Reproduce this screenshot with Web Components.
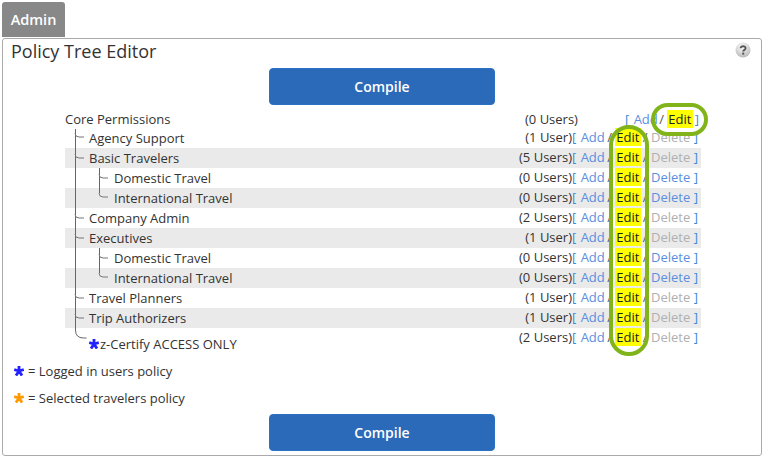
<!DOCTYPE html>
<html>
<head>
<meta charset="utf-8">
<style>
  html, body { margin: 0; padding: 0; background: #fff; }
  body { font-family: "Open Sans", sans-serif; font-size: 13px; color: #333; }
</style>
</head>
<body>
<admin-page>
  <admin-tab>Admin</admin-tab>
  <policy-panel heading="Policy Tree Editor">
    <compile-button>Compile</compile-button>
    <policy-tree>
      <policy-row name="Core Permissions" users="(0 Users)" depth="0" root></policy-row>
      <policy-row name="Agency Support" users="(1 User)" depth="1" nodelete></policy-row>
      <policy-row name="Basic Travelers" users="(5 Users)" depth="1" shaded nodelete></policy-row>
      <policy-row name="Domestic Travel" users="(0 Users)" depth="2"></policy-row>
      <policy-row name="International Travel" users="(0 Users)" depth="2" shaded></policy-row>
      <policy-row name="Company Admin" users="(2 Users)" depth="1" nodelete></policy-row>
      <policy-row name="Executives" users="(1 User)" depth="1" shaded nodelete></policy-row>
      <policy-row name="Domestic Travel" users="(0 Users)" depth="2"></policy-row>
      <policy-row name="International Travel" users="(0 Users)" depth="2" shaded></policy-row>
      <policy-row name="Travel Planners" users="(1 User)" depth="1" nodelete></policy-row>
      <policy-row name="Trip Authorizers" users="(1 User)" depth="1" shaded nodelete></policy-row>
      <policy-row name="z-Certify ACCESS ONLY" users="(2 Users)" depth="1" starred nodelete></policy-row>
    </policy-tree>
    <policy-legend color="#2222ff">= Logged in users policy</policy-legend>
    <policy-legend color="#ff9900">= Selected travelers policy</policy-legend>
    <compile-button bottom>Compile</compile-button>
  </policy-panel>
</admin-page>

<script>
// Five armed star used by the tree and the legend
const starSvg = (color) => `
  <svg width="10" height="10" viewBox="0 0 10 10" style="display:block;flex:none">
    <path d="M5 5 V0 M5 5 L9.8 3.5 M5 5 L8 9.6 M5 5 L2 9.6 M5 5 L0.2 3.5" stroke="${color}" stroke-width="2.8" fill="none"/>
  </svg>`;

class AdminPage extends HTMLElement {
  constructor() {
    super();
    const shadow = this.attachShadow({ mode: "open" });
    shadow.innerHTML = `
      <style>
        :host { display: flex; flex-direction: column; align-items: flex-start; padding: 2px 4px 0 2px; width: 760px; font-family: "Open Sans", sans-serif; }
      </style>
      <slot></slot>`;
  }
}

class AdminTab extends HTMLElement {
  constructor() {
    super();
    const shadow = this.attachShadow({ mode: "open" });
    shadow.innerHTML = `
      <style>
        :host { display: block; box-sizing: border-box; width: 63px; height: 35px; margin-bottom: 1px; line-height: 35px; text-align: center; background: #888; color: #fff; font-size: 14.5px; font-weight: 600; border-radius: 3px 3px 0 0; }
      </style>
      <slot></slot>`;
  }
}

class PolicyPanel extends HTMLElement {
  constructor() {
    super();
    const shadow = this.attachShadow({ mode: "open" });
    shadow.innerHTML = `
      <style>
        :host { display: block; position: relative; box-sizing: border-box; width: 760px; height: 418px; border: 1px solid #aaa; border-radius: 3px; color: #333; }
        h1 { margin: 0; padding: 0 0 0 8px; height: 29px; font-size: 18px; line-height: 25px; font-weight: 400; color: #333; }
        .help { position: absolute; top: 3px; right: 10px; width: 16px; height: 16px; }
        .body { display: flex; flex-direction: column; }
      </style>
      <h1></h1>
      <svg class="help" viewBox="0 0 16 16">
        <defs><radialGradient id="g" cx="45%" cy="30%" r="75%"><stop offset="0" stop-color="#fff"/><stop offset="1" stop-color="#b4b4b4"/></radialGradient></defs>
        <circle cx="8" cy="8" r="7.5" fill="url(#g)"/>
        <path d="M5.6 6.2 C5.6 3.6 10.6 3.6 10.6 6.2 C10.6 8 8.2 7.8 8.2 9.6" fill="none" stroke="#555" stroke-width="1.9"/>
        <rect x="7.2" y="10.6" width="2" height="2" fill="#555"/>
      </svg>
      <div class="body"><slot></slot></div>`;
    shadow.querySelector("h1").textContent = this.getAttribute("heading");
  }
}

class CompileButton extends HTMLElement {
  constructor() {
    super();
    const shadow = this.attachShadow({ mode: "open" });
    shadow.innerHTML = `
      <style>
        :host { display: block; box-sizing: border-box; width: 226px; height: 37px; margin-left: 266px; line-height: 35px; text-align: center; background: #2a6ab8; border: 1px solid #2a70c4; border-radius: 4px; color: #fff; font-size: 14px; font-weight: 600; }
        :host([bottom]) { margin-top: 3px; }
      </style>
      <slot></slot>`;
  }
}

class PolicyTree extends HTMLElement {
  constructor() {
    super();
    const shadow = this.attachShadow({ mode: "open" });
    // Connector lines sit over the rows
    const tick = (x, y) => `M${x} ${y - 4} q0 4 4 4 h5`;
    const depth1 = [28, 49, 109, 129, 189, 209].map((y) => tick(72, y)).join(" ");
    const depth2 = [69, 88, 149, 168].map((y) => tick(96, y)).join(" ");
    shadow.innerHTML = `
      <style>
        :host { display: block; position: relative; margin: 4px 0 2px 62px; width: 636px; }
        svg { position: absolute; left: 0; top: 0; width: 140px; height: 240px; pointer-events: none; margin-left: -62px; }
      </style>
      <slot></slot>
      <svg viewBox="0 0 140 240" fill="none">
        <path d="M72.5 20 V221 q0 8 8 8 h3" stroke="#666"/>
        <path d="${depth1}" stroke="#777"/>
        <path d="M96.5 59 V84 M96.5 139 V164" stroke="#666"/>
        <path d="${depth2}" stroke="#777"/>
      </svg>`;
  }
}

class PolicyRow extends HTMLElement {
  constructor() {
    super();
    const shadow = this.attachShadow({ mode: "open" });
    const depth = Number(this.getAttribute("depth"));
    const indent = [0, 24, 49][depth];
    const star = this.hasAttribute("starred");
    const root = this.hasAttribute("root");
    const del = this.hasAttribute("nodelete") ? "off" : "on";
    shadow.innerHTML = `
      <style>
        :host { display: grid; grid-template-columns: 1fr 110px 129px; align-items: start; height: 20px; line-height: 18px; white-space: nowrap; font-size: 13px; color: #333; }
        :host([shaded]) { background: #eaeaea; }
        :host([root]) { height: 19px; }
        :host([starred]) { height: 27px; }
        .name { display: flex; align-items: center; height: 20px; line-height: 20px; padding-left: ${indent}px; }
        :host([starred]) .name { padding-top: 6px; }
        .star { margin-right: 1px; }
        .users { text-align: right; }
        :host([root]) .users { text-align: left; padding: 1px 0 0 63px; }
        .actions { color: #3a8ad8; }
        :host([root]) .actions { padding: 1px 0 0 53px; }
        .add { color: #5b8fe0; margin: 0 -1px 0 1px; }
        :host([root]) .add { margin-right: -2px; }
        .sep { color: #555; }
        .edit { display: inline-block; line-height: 18px; padding: 0 2px 0 1px; margin-right: -2px; background: #ffff00; color: #222; }
        .off { color: #b0b0b0; }
        .on { color: #5b8fe0; }
      </style>
      <span class="name">${star ? `<span class="star">${starSvg("#2222ff")}</span>` : ""}<span class="label"></span></span>
      <span class="users"></span>
      <span class="actions">[ <span class="add">Add</span> <span class="sep">/</span> <span class="edit">Edit</span>${root ? " ]" : ` <span class="sep">/</span> <span class="${del}">Delete</span> ]`}</span>`;
    shadow.querySelector(".label").textContent = this.getAttribute("name");
    shadow.querySelector(".users").textContent = this.getAttribute("users");
  }
}

class PolicyLegend extends HTMLElement {
  constructor() {
    super();
    const shadow = this.attachShadow({ mode: "open" });
    shadow.innerHTML = `
      <style>
        :host { display: flex; align-items: center; gap: 4px; height: 27px; padding-left: 11px; font-size: 13px; color: #333; }
      </style>
      ${starSvg(this.getAttribute("color"))}<span><slot></slot></span>`;
  }
}

class HighlightOval extends HTMLElement {
  constructor() {
    super();
    const shadow = this.attachShadow({ mode: "open" });
    shadow.innerHTML = `
      <style>
        :host { display: block; position: absolute; box-sizing: border-box; border: 4px solid #80b41a; border-radius: 20px; }
      </style>`;
  }
}

customElements.define("admin-page", AdminPage);
customElements.define("admin-tab", AdminTab);
customElements.define("policy-panel", PolicyPanel);
customElements.define("compile-button", CompileButton);
customElements.define("policy-tree", PolicyTree);
customElements.define("policy-row", PolicyRow);
customElements.define("policy-legend", PolicyLegend);
customElements.define("highlight-oval", HighlightOval);

// The two callouts drawn over the Edit links
[[651, 103, 57, 33], [609, 125, 40, 231]].forEach(([x, y, w, h]) => {
  const oval = document.createElement("highlight-oval");
  oval.style.cssText = `left:${x}px;top:${y}px;width:${w}px;height:${h}px`;
  document.body.appendChild(oval);
});
</script>
</body>
</html>
